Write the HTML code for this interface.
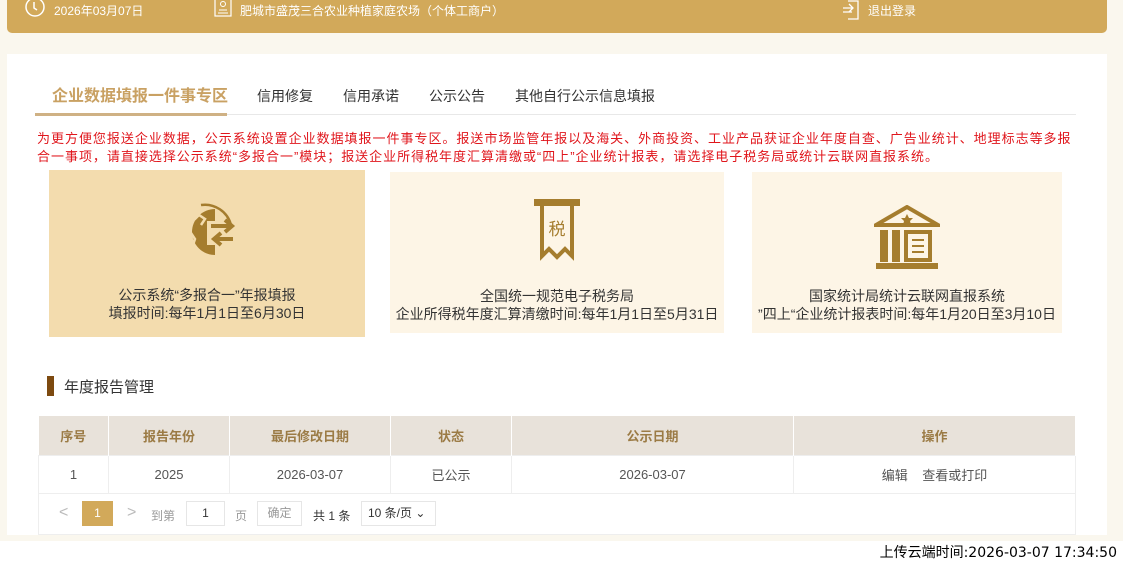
<!DOCTYPE html><html><head><meta charset="utf-8"><style>
*{margin:0;padding:0;box-sizing:border-box}
body{width:1123px;height:565px;overflow:hidden;background:#faf7ee;font-family:"Liberation Sans","Noto Sans CJK SC",sans-serif;position:relative;color:#333}
.top{position:absolute;left:7px;top:0;width:1100px;height:33px;background:#d2a95a;border-radius:0 0 5px 5px;color:#fff;font-size:12px}
.top span{position:absolute;top:2px}
.panel{position:absolute;left:7px;top:54px;width:1100px;height:481px;background:#fff}
.tabs{position:absolute;left:28px;top:28px;width:1041px;height:33px;border-bottom:1px solid #e8e8e8}
.tabs span{position:absolute;top:4px;font-size:14px;color:#333}
.tabs .act{left:17px;top:0;font-size:16px;font-weight:bold;color:#c9a163}
.ul{position:absolute;left:0;top:31px;width:192px;height:3px;background:#cfb184}
.red{position:absolute;left:30px;top:76px;width:1045px;font-size:13px;letter-spacing:0.98px;line-height:18px;color:#e0161c}
.card{position:absolute;text-align:center;font-size:14px;line-height:18px;color:#333}
.card svg{display:block;margin:0 auto}
table{position:absolute;left:31px;top:362px;width:1038px;border-collapse:collapse;font-size:13px}
th{background:#e8e2da;color:#9b7b45;height:39px;border-right:1px solid #fff;font-weight:bold}
td{height:38px;text-align:center;border:1px solid #eee;color:#555}
.pg{position:absolute;left:31px;top:439px;width:1038px;height:42px;border:1px solid #eee;border-top:none;font-size:12px;color:#999}
.pg *{position:absolute}
</style></head><body>
<div class="top">
<svg style="position:absolute;left:17px;top:-4px" width="22" height="22" viewBox="0 0 22 22"><circle cx="11" cy="11" r="9" fill="none" stroke="#fff" stroke-width="1.5"/><path d="M10 6v6l3 2" fill="none" stroke="#fff" stroke-width="1.5"/></svg>
<span style="left:47px">2026年03月07日</span>
<svg style="position:absolute;left:207px;top:-2px" width="18" height="20" viewBox="0 0 18 20"><rect x="1" y="0" width="16" height="18" fill="none" stroke="#fff" stroke-width="1.2"/><circle cx="9" cy="6" r="2.5" fill="none" stroke="#fff"/><path d="M5 12h8M4 15h10" stroke="#fff"/></svg>
<span style="left:233px">肥城市盛茂三合农业种植家庭农场（个体工商户）</span>
<svg style="position:absolute;left:835px;top:0" width="18" height="20" viewBox="0 0 18 20"><path d="M1 8h9M7 4l4 4-4 4M1 12h9" fill="none" stroke="#fff" stroke-width="1.3"/><path d="M6 1h10v18H6" fill="none" stroke="#fff" stroke-width="1.3"/></svg>
<span style="left:861px">退出登录</span>
</div>
<div class="panel">
<div class="tabs"><span class="act">企业数据填报一件事专区</span><span style="left:222px">信用修复</span><span style="left:308px">信用承诺</span><span style="left:394px">公示公告</span><span style="left:480px">其他自行公示信息填报</span><div class="ul"></div></div>
<div class="red">为更方便您报送企业数据，公示系统设置企业数据填报一件事专区。报送市场监管年报以及海关、外商投资、工业产品获证企业年度自查、广告业统计、地理标志等多报合一事项，请直接选择公示系统“多报合一”模块；报送企业所得税年度汇算清缴或“四上”企业统计报表，请选择电子税务局或统计云联网直报系统。</div>
<div class="card" style="left:42px;top:116px;width:316px;height:167px;background:#f3dcae;padding-top:25px">
<svg width="72" height="72" viewBox="0 0 72 72"><path d="M44 14A23 23 0 1 0 44 60L44 50 36 50 36 26 44 26Z" fill="#a57d2e"/><path d="M30 10a27 27 0 0 1 30 20" fill="none" stroke="#a57d2e" stroke-width="2.5"/><path d="M40 31h20M54 25l7 6-7 6M62 44H44M50 38l-7 6 7 6" fill="none" stroke="#a57d2e" stroke-width="4"/><path d="M16 22l8 2 4-4 6 4-4 6M14 40l6-2 4 6-2 6" fill="none" stroke="#f3dcae" stroke-width="2.5"/></svg>
<div style="margin-top:19px">公示系统“多报合一”年报填报<br>填报时间:每年1月1日至6月30日</div></div>
<div class="card" style="left:383px;top:118px;width:334px;height:161px;background:#fdf5e6;padding-top:25px">
<svg width="50" height="64" viewBox="0 0 50 64"><rect x="2" y="2" width="46" height="7" fill="#a57d2e"/><path d="M10 9v50l7-7 8 8 8-8 7 7V9" fill="none" stroke="#a57d2e" stroke-width="4"/><text x="25" y="38" font-size="17" fill="#a57d2e" text-anchor="middle" font-family="Noto Sans CJK SC">税</text></svg>
<div style="margin-top:26px">全国统一规范电子税务局<br>企业所得税年度汇算清缴时间:每年1月1日至5月31日</div></div>
<div class="card" style="left:745px;top:118px;width:310px;height:161px;background:#fdf5e6;padding-top:33px">
<svg width="66" height="66" viewBox="0 0 66 66"><path d="M33 2L2 20h62z" fill="none" stroke="#a57d2e" stroke-width="4"/><path d="M33 9l2 4h4l-3 3 1 4-4-2-4 2 1-4-3-3h4z" fill="#a57d2e"/><rect x="6" y="25" width="8" height="32" fill="#a57d2e"/><rect x="18" y="25" width="8" height="32" fill="#a57d2e"/><rect x="32" y="27" width="24" height="28" fill="none" stroke="#a57d2e" stroke-width="4"/><path d="M38 35h12M38 41h12M38 47h12" stroke="#a57d2e" stroke-width="2"/><rect x="2" y="58" width="62" height="6" fill="#a57d2e"/></svg>
<div style="margin-top:16px">国家统计局统计云联网直报系统<br>”四上“企业统计报表时间:每年1月20日至3月10日</div></div>
<div style="position:absolute;left:40px;top:322px;width:7px;height:20px;background:#7d4a10"></div>
<div style="position:absolute;left:57px;top:322px;font-size:15px;color:#333">年度报告管理</div>
<table><tr><th style="width:70px">序号</th><th style="width:121px">报告年份</th><th style="width:161px">最后修改日期</th><th style="width:121px">状态</th><th style="width:282px">公示日期</th><th>操作</th></tr>
<tr><td>1</td><td>2025</td><td>2026-03-07</td><td>已公示</td><td>2026-03-07</td><td>编辑&nbsp;&nbsp;&nbsp;&nbsp;查看或打印</td></tr></table>
<div class="pg"><span style="left:20px;top:11px;font-size:16px;color:#bbb">&lt;</span><span style="left:43px;top:8px;width:31px;height:25px;background:#d2a95a;color:#fff;text-align:center;line-height:25px">1</span><span style="left:88px;top:11px;font-size:16px;color:#bbb">&gt;</span><span style="left:112px;top:14px">到第</span><span style="left:147px;top:8px;width:39px;height:25px;border:1px solid #e6e6e6;text-align:center;line-height:23px;color:#333">1</span><span style="left:196px;top:14px">页</span><span style="left:218px;top:8px;width:45px;height:25px;border:1px solid #e6e6e6;text-align:center;line-height:23px">确定</span><span style="left:274px;top:14px;color:#333">共 1 条</span><span style="left:322px;top:8px;width:75px;height:25px;border:1px solid #e6e6e6;line-height:23px;padding-left:6px;color:#333">10 条/页 ⌄</span></div>
</div>
<div style="position:absolute;left:0;top:541px;width:1123px;height:24px;background:#fff"></div>
<div style="position:absolute;right:6px;top:542px;font-size:14px;color:#000;font-family:'DejaVu Sans','Noto Sans CJK SC',sans-serif">上传云端时间:2026-03-07 17:34:50</div>
</body></html>
